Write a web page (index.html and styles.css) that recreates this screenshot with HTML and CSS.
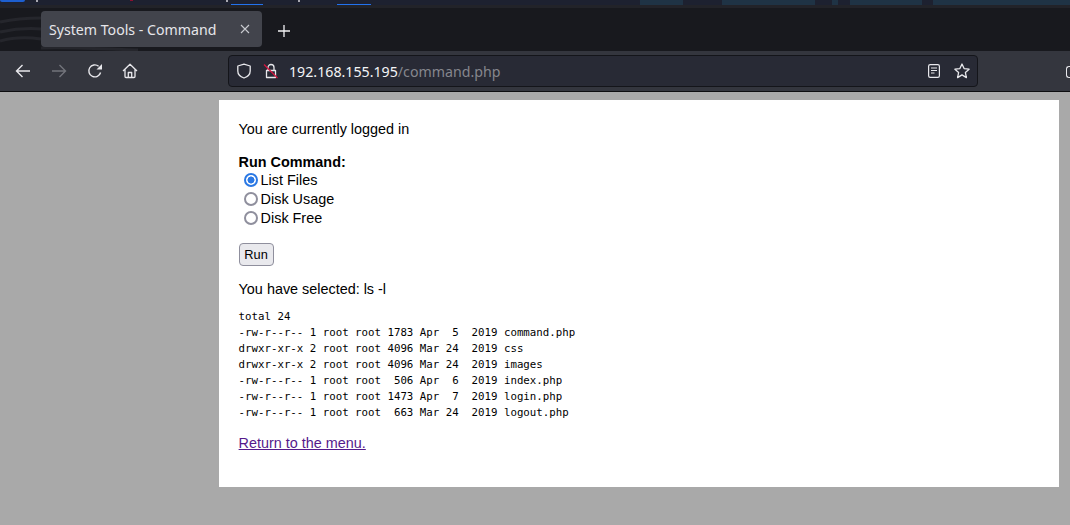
FILE: index.html
```html
<!DOCTYPE html>
<html lang="en">
<head>
<meta charset="utf-8">
<title>System Tools - Command</title>
<link rel="stylesheet" href="styles.css">
</head>
<body>
<div class="desktop-strip">
  <span class="strip-glow"></span>
  <span class="strip-tick t1"></span>
  <span class="strip-tick t2"></span>
  <span class="strip-tick t3"></span>
  <span class="strip-red"></span>
  <span class="strip-line l1"></span>
  <span class="strip-line l2"></span>
  <span class="patch p1"></span>
  <span class="patch p2"></span>
  <span class="patch p3"></span>
  <span class="patch p4"></span>
  <span class="patch p5"></span>
</div>
<div class="tabbar">
  <svg class="swoosh" width="140" height="43" viewBox="0 0 140 43"><path d="M0 14C14 11 28 10 41 10M0 24C14 21 28 20 41 21M0 33C14 29 28 29 41 31M41 40C70 39 110 41 138 42" stroke="#25262c" stroke-width="3" fill="none"/></svg>
  <div class="tab">
    <span class="tab-title">System Tools - Command</span>
    <svg class="tab-close" width="10" height="10" viewBox="0 0 10 10"><path d="M1 1l8 8M9 1l-8 8" stroke="#c9cbd0" stroke-width="1.1" fill="none"/></svg>
  </div>
  <svg class="new-tab" width="12" height="12" viewBox="0 0 12 12"><path d="M6 0v12M0 6h12" stroke="#f2f2f4" stroke-width="1.3" fill="none"/></svg>
</div>
<div class="navbar">
  <svg class="nav-icon back" width="16" height="16" viewBox="0 0 16 16"><path d="M15 8H1.5M7.5 2L1.5 8l6 6" stroke="#e8e8ec" stroke-width="1.4" fill="none"/></svg>
  <svg class="nav-icon forward" width="16" height="16" viewBox="0 0 16 16"><path d="M1 8h13.5M8.5 2l6 6-6 6" stroke="#72747b" stroke-width="1.4" fill="none"/></svg>
  <svg class="nav-icon reload" width="16" height="16" viewBox="0 0 16 16"><path d="M13.6 9.5A6 6 0 1 1 11.6 3.2" stroke="#e8e8ec" stroke-width="1.4" fill="none"/><path d="M15 1v5.5H9.5z" fill="#e8e8ec"/></svg>
  <svg class="nav-icon home" width="16" height="16" viewBox="0 0 16 16"><path d="M1 8L8 1.2 15 8M3 6.5V13.5a1 1 0 0 0 1 1h8a1 1 0 0 0 1-1V6.5M6.3 14.5V9.5h3.4v5" stroke="#e8e8ec" stroke-width="1.3" fill="none" stroke-linejoin="round"/></svg>
  <div class="urlbar">
    <svg class="shield" width="16" height="16" viewBox="0 0 16 16"><path d="M8 1.2l6.2 1.8v5c0 3.4-2.6 5.8-6.2 7-3.6-1.2-6.2-3.6-6.2-7V3z" stroke="#e8e8ec" stroke-width="1.3" fill="none" stroke-linejoin="round"/></svg>
    <svg class="lock" width="16" height="16" viewBox="0 0 16 16"><path d="M5 7V4.5a3 3 0 0 1 6 0V7M3.5 7.5h9v7h-9z" stroke="#e8e8ec" stroke-width="1.3" fill="none" stroke-linejoin="round"/><path d="M1 1.5l13.5 13.5" stroke="#d6153f" stroke-width="1.3"/></svg>
    <span class="url"><span class="host">192.168.155.195</span><span class="path">/command.php</span></span>
    <svg class="reader" width="14" height="16" viewBox="0 0 14 16"><rect x="1.6" y="1.6" width="10.8" height="12.8" rx="1.6" stroke="#e8e8ec" stroke-width="1.2" fill="none"/><path d="M4 5h6M4 7.5h6M4 10h3.5" stroke="#e8e8ec" stroke-width="1.2"/></svg>
    <svg class="star" width="16" height="16" viewBox="0 0 16 16"><path d="M8 1l2.1 4.6 5 .6-3.7 3.4 1 5L8 11.9l-4.4 2.7 1-5L.9 6.2l5-.6z" stroke="#e8e8ec" stroke-width="1.3" fill="none" stroke-linejoin="round"/></svg>
  </div>
  <span class="ext-edge"></span>
</div>
<main class="page">
  <section class="card">
    <p class="status">You are currently logged in</p>
    <form class="command-form">
      <strong class="form-title">Run Command:</strong>
      <label class="option"><input type="radio" name="radio" checked>List Files</label>
      <label class="option"><input type="radio" name="radio">Disk Usage</label>
      <label class="option"><input type="radio" name="radio">Disk Free</label>
      <button type="button" class="run">Run</button>
    </form>
    <p class="selected">You have selected: ls -l</p>
<pre class="output">total 24
-rw-r--r-- 1 root root 1783 Apr  5  2019 command.php
drwxr-xr-x 2 root root 4096 Mar 24  2019 css
drwxr-xr-x 2 root root 4096 Mar 24  2019 images
-rw-r--r-- 1 root root  506 Apr  6  2019 index.php
-rw-r--r-- 1 root root 1473 Apr  7  2019 login.php
-rw-r--r-- 1 root root  663 Mar 24  2019 logout.php
</pre>
    <a class="menu-link" href="#">Return to the menu.</a>
  </section>
</main>
</body>
</html>
```

FILE: styles.css
```css
* { box-sizing: border-box; }
html, body { margin: 0; height: 100%; overflow: hidden; }
body { background: #a9a9a9; display: flex; flex-direction: column; font-family: "Liberation Sans", Arial, sans-serif; color: #000; }

.desktop-strip { height: 8px; background: #1d2130; position: relative; overflow: hidden; flex: none; border-bottom: 3px solid #222329; }
.strip-glow { position: absolute; left: 0; top: 0; width: 25px; height: 2px; border-radius: 0 0 3px 3px; background: #1d5fd0; }
.strip-tick { position: absolute; top: 0; width: 2px; height: 2px; background: #a8a8b0; }
.t1 { left: 36px; }
.t2 { left: 226px; }
.t3 { left: 298px; }
.strip-red { position: absolute; left: 130px; top: 0; width: 3px; height: 1px; background: #8a1030; }
.strip-line { position: absolute; top: 4px; height: 1px; background: #2272ee; }
.l1 { left: 231px; width: 32px; }
.l2 { left: 337px; width: 34px; }
.patch { position: absolute; top: 0; height: 5px; background: #1f3345; }
.p1 { left: 640px; width: 43px; }
.p2 { left: 722px; width: 93px; }
.p3 { left: 832px; width: 6px; }
.p4 { left: 850px; width: 72px; }
.p5 { left: 933px; width: 137px; }

.tabbar { height: 43px; background: #18191e; display: flex; align-items: flex-start; flex: none; padding: 3px 0 0 41px; position: relative; }
.swoosh { position: absolute; left: 0; top: 0; }
.tab { width: 221px; height: 36px; background: #42444c; border-radius: 4px; display: flex; align-items: center; justify-content: space-between; padding: 0 12px 0 8px; position: relative; }
.tab-title { font: 14.15px "Noto Sans", "Open Sans", sans-serif; color: #e6e6ea; white-space: nowrap; }
.new-tab { margin: 14px 0 0 16px; position: relative; }

.navbar { height: 41px; background: #34363e; display: flex; align-items: center; flex: none; position: relative; border-bottom: 1px solid #0d0d10; padding: 0 0 0 15px; }
.nav-icon { flex: none; }
.forward { margin-left: 20px; }
.reload { margin-left: 20px; }
.home { margin-left: 19px; }
.urlbar { width: 750px; height: 32px; margin-left: 90px; background: #282a35; border: 1px solid #14151a; border-radius: 4px; display: flex; align-items: center; padding: 0 7px 0 7px; flex: none; }
.lock { margin-left: 11px; }
.url { font: 14.2px "Noto Sans", "Open Sans", sans-serif; margin-left: 10px; flex: 1; white-space: nowrap; }
.host { color: #f4f4f6; }
.path { color: #85868d; }
.star { margin-left: 13px; }
.ext-edge { position: absolute; right: 0; top: 15px; width: 4px; height: 12px; border: 1.3px solid #e8e8ec; border-right: 0; border-radius: 3px 0 0 3px; }

.page { flex: 1; padding: 8px 11px 0 219px; }
.card { background: #fff; height: 387px; padding: 20px 20px 20px 19.6px; font-size: 14.4px; line-height: 19px; }
.status { margin: 0 0 14px; }
.command-form { display: flex; flex-direction: column; align-items: flex-start; }
.form-title { font-weight: 700; line-height: 18px; }
.option { display: flex; align-items: center; height: 19px; padding-left: 5px; }
.option input { appearance: none; width: 14px; height: 14px; margin: 0 3px 1px 0; border: 2px solid #8f8f9d; border-radius: 50%; background: #fff; }
.option input:checked { border-color: #2a78e4; background: radial-gradient(circle, #2a78e4 0 3.2px, #fff 3.8px); }
.run { margin: 15px 0 0; width: 35px; height: 23px; padding: 0; font: 12.8px "Liberation Sans", Arial, sans-serif; background: #e9e9ed; border: 1px solid #8f8f9d; border-radius: 4px; color: #000; }
.selected { margin: 14px 0 0; }
.output { margin: 10px 0 0; font: 10.76px/16px "DejaVu Sans Mono", monospace; }
.menu-link { display: inline-block; margin-top: 13px; color: #551a8b; text-decoration: underline; }
```
